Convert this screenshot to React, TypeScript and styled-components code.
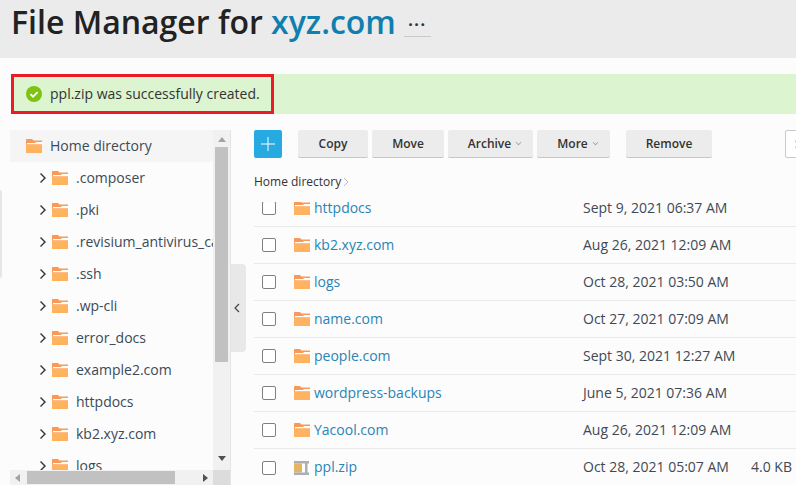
import React from 'react';
import styled, {createGlobalStyle} from 'styled-components';

const treeItems = ['.composer', '.pki', '.revisium_antivirus_cache', '.ssh', '.wp-cli', 'error_docs', 'example2.com', 'httpdocs', 'kb2.xyz.com', 'logs'];

const files = [
    {name: 'httpdocs', date: 'Sept 9, 2021 06:37 AM'},
    {name: 'kb2.xyz.com', date: 'Aug 26, 2021 12:09 AM'},
    {name: 'logs', date: 'Oct 28, 2021 03:50 AM'},
    {name: 'name.com', date: 'Oct 27, 2021 07:09 AM'},
    {name: 'people.com', date: 'Sept 30, 2021 12:27 AM'},
    {name: 'wordpress-backups', date: 'June 5, 2021 07:36 AM'},
    {name: 'Yacool.com', date: 'Aug 26, 2021 12:09 AM'},
    {name: 'ppl.zip', date: 'Oct 28, 2021 05:07 AM', size: '4.0 KB', zip: true},
];

const FolderIcon = () => (
    <IconSvg viewBox="0 0 16 14">
        <path d="M0 1C0 .4.4 0 1 0h5l1.500 1.500H16V14H0z" fill="#f8995a"/>
        <path d="M1 4h8l1-1h6v2.500H1z" fill="#fff"/>
        <path d="M0 5.500h16V14H0z" fill="#ffb25f"/>
    </IconSvg>
);

const ZipIcon = () => (
    <IconSvg viewBox="0 0 16 14">
        <path d="M0 2.500h8v9H0z" fill="#e3b562"/>
        <path d="M8 2.500h3v9H8zM13.500 2.500H15v9h-1.500z" fill="#fff"/>
        <path d="M0 0h15v2.500H0zM0 11.500h15V14H0zM11 2h2.500v10H11z" fill="#a9afb4"/>
    </IconSvg>
);

const App: React.FC = () => {
    return (
        <Page>
            <GlobalStyle/>
            <Header>
                <Title>File Manager for <DomainLink>xyz.com</DomainLink></Title>
                <DotsButton>···</DotsButton>
            </Header>
            <AlertBar>
                <AlertMarked>
                    <svg width="16" height="16" viewBox="0 0 16 16">
                        <circle cx="8" cy="8" r="8" fill="#7cc40f"/>
                        <path d="M4.400 8.200l2.600 2.500 4.600-4.600" fill="none" stroke="#fff" strokeWidth="1.800"/>
                    </svg>
                    ppl.zip was successfully created.
                </AlertMarked>
            </AlertBar>
            <Content>
                <Sliver/>
                <TreePanel>
                    <TreeView>
                        <HomeRow><FolderIcon/><TreeLabel>Home directory</TreeLabel></HomeRow>
                        {treeItems.map(item => (
                            <TreeRow key={item}>
                                <svg width="8" height="12" viewBox="0 0 8 12">
                                    <path d="M1.500 1.500L6 6l-4.500 4.500" fill="none" stroke="#333" strokeWidth="1.400"/>
                                </svg>
                                <FolderIcon/>
                                <TreeLabel>{item}</TreeLabel>
                            </TreeRow>
                        ))}
                    </TreeView>
                    <VTrack>
                        <Arrow $dir="up"/>
                        <VThumb/>
                        <Arrow $dir="down"/>
                    </VTrack>
                    <HTrack>
                        <Arrow $dir="left"/>
                        <HThumb/>
                        <Arrow $dir="right"/>
                    </HTrack>
                    <Corner/>
                </TreePanel>
                <CollapseHandle>
                    <svg width="6" height="10" viewBox="0 0 6 10">
                        <path d="M5 1L1 5l4 4" fill="none" stroke="#444" strokeWidth="1.200"/>
                    </svg>
                </CollapseHandle>
                <Main>
                    <Toolbar>
                        <AddButton>
                            <svg width="14" height="14" viewBox="0 0 14 14">
                                <path d="M7 0v14M0 7h14" stroke="#fff" strokeWidth="1"/>
                            </svg>
                        </AddButton>
                        <ActionButton $w={70} $gap={4}>Copy</ActionButton>
                        <ActionButton $w={72} $gap={4}>Move</ActionButton>
                        <ActionButton $w={85} $gap={4} $menu>Archive<Caret/></ActionButton>
                        <ActionButton $w={73} $gap={16} $menu>More<Caret/></ActionButton>
                        <ActionButton $w={86} $gap={73}>Remove</ActionButton>
                        <SearchInput>S</SearchInput>
                    </Toolbar>
                    <Breadcrumb>
                        Home directory
                        <svg width="6" height="10" viewBox="0 0 6 10">
                            <path d="M1 1l4 4-4 4" fill="none" stroke="#bbb" strokeWidth="1"/>
                        </svg>
                    </Breadcrumb>
                    <ListWindow>
                        <FileList>
                            {files.map(file => (
                                <FileRow key={file.name}>
                                    <Checkbox/>
                                    {file.zip ? <ZipIcon/> : <FolderIcon/>}
                                    <FileName>{file.name}</FileName>
                                    <FileDate>{file.date}</FileDate>
                                    <FileSize>{file.size}</FileSize>
                                </FileRow>
                            ))}
                        </FileList>
                    </ListWindow>
                </Main>
            </Content>
        </Page>
    );
};

export default App;

const GlobalStyle = createGlobalStyle`
    html, body {
        margin: 0;
        padding: 0;
        background: #fcfcfc;
    }
`;

const Page = styled.div`
    width: 796px;
    height: 485px;
    overflow: hidden;
    display: flex;
    flex-direction: column;
    font-family: "Open Sans", "Liberation Sans", sans-serif;
    font-size: 14px;
    color: #333;
    background: #fcfcfc;
`;

const Header = styled.div`
    flex: none;
    height: 58px;
    box-sizing: border-box;
    padding-left: 11px;
    display: flex;
    align-items: flex-start;
    background: #ebebeb;
`;

const Title = styled.h1`
    margin: 0;
    font-size: 32px;
    line-height: 44px;
    font-weight: 600;
    color: #222;
    white-space: nowrap;
`;

const DomainLink = styled.span`
    color: #0f7fb0;
`;

const DotsButton = styled.div`
    width: 27px;
    height: 14px;
    margin: 22px 0 0 8px;
    border-bottom: 1px solid #c9c9c9;
    font-size: 16px;
    font-weight: 700;
    letter-spacing: 1.500px;
    line-height: 4px;
    text-align: center;
    color: #333;
`;

const AlertBar = styled.div`
    flex: none;
    height: 40px;
    margin: 16px 0 16px 11px;
    display: flex;
    background: #dcf4cf;
`;

const AlertMarked = styled.div`
    width: 263px;
    box-sizing: border-box;
    padding: 0 0 1px 12px;
    display: flex;
    align-items: center;
    gap: 8px;
    border: 3px solid #ed1c24;
    color: #333;
    white-space: nowrap;
`;

const Content = styled.div`
    flex: 1;
    min-height: 0;
    display: flex;
    align-items: stretch;
`;

const Sliver = styled.div`
    flex: none;
    width: 2px;
    height: 88px;
    margin: 60px 8px 0 0;
    background: #e6e6e6;
    border-radius: 0 3px 3px 0;
`;

const TreePanel = styled.div`
    flex: none;
    width: 221px;
    box-sizing: border-box;
    display: grid;
    grid-template-columns: 203px 17px;
    grid-template-rows: 340px 15px;
    border-right: 1px solid #e4e4e4;
`;

const TreeView = styled.div`
    overflow: hidden;
    min-width: 0;
`;

const HomeRow = styled.div`
    height: 32px;
    padding-left: 16px;
    display: flex;
    align-items: center;
    gap: 8px;
    background: #f5f5f5;
`;

const TreeRow = styled.div`
    height: 32px;
    padding-left: 29px;
    display: flex;
    align-items: center;
    white-space: nowrap;

    svg:first-child {
        flex: none;
        margin: 0 5px 0 0;
    }
`;

const TreeLabel = styled.span`
    margin: -2px 0 0 8px;
    white-space: nowrap;
    color: #3b4a57;

    ${HomeRow} & {
        margin-left: 0;
    }
`;

const IconSvg = styled.svg`
    flex: none;
    width: 16px;
    height: 14px;
`;

const VTrack = styled.div`
    display: flex;
    flex-direction: column;
    align-items: center;
    padding: 7px 0 9px;
    box-sizing: border-box;
    background: #f1f1f1;
`;

const VThumb = styled.div`
    width: 13px;
    height: 215px;
    margin: 5px 0 auto;
    background: #c1c1c1;
`;

const HTrack = styled.div`
    display: flex;
    align-items: center;
    padding: 0 5px;
    background: #f1f1f1;
`;

const HThumb = styled.div`
    width: 148px;
    height: 13px;
    margin: 0 auto 0 7px;
    background: #c1c1c1;
`;

const Corner = styled.div`
    background: #dcdcdc;
`;

const arrowBorders = {
    up: 'border-width: 0 4px 5px; border-color: transparent transparent #a3a3a3;',
    down: 'border-width: 5px 4px 0; border-color: #505050 transparent transparent;',
    left: 'border-width: 4px 5px 4px 0; border-color: transparent #a3a3a3 transparent transparent;',
    right: 'border-width: 4px 0 4px 5px; border-color: transparent transparent transparent #505050;',
};

const Arrow = styled.div<{$dir: keyof typeof arrowBorders}>`
    flex: none;
    width: 0;
    height: 0;
    border-style: solid;
    ${props => arrowBorders[props.$dir]}
`;

const CollapseHandle = styled.div`
    flex: none;
    width: 15px;
    height: 88px;
    box-sizing: border-box;
    padding-right: 3px;
    margin: 134px 8px 0 0;
    display: flex;
    align-items: center;
    justify-content: center;
    background: #e8e8e8;
    border-radius: 0 4px 4px 0;
`;

const Main = styled.div`
    flex: 1;
    min-width: 0;
    display: flex;
    flex-direction: column;
`;

const Toolbar = styled.div`
    flex: none;
    height: 28px;
    display: flex;
    white-space: nowrap;
`;

const AddButton = styled.div`
    flex: none;
    width: 28px;
    height: 28px;
    margin-right: 16px;
    display: flex;
    align-items: center;
    justify-content: center;
    background: #27a9e1;
    border-radius: 2px;
`;

const ActionButton = styled.div<{$w: number; $gap: number; $menu?: boolean}>`
    flex: none;
    width: ${props => props.$w}px;
    height: 28px;
    box-sizing: border-box;
    padding-left: ${props => props.$menu ? 8 : 0}px;
    margin-right: ${props => props.$gap}px;
    display: flex;
    align-items: center;
    justify-content: center;
    gap: 4px;
    background: #ececec;
    border-bottom: 1px solid #c6c6c6;
    border-radius: 2px;
    font-size: 12px;
    font-weight: 600;
    color: #333;
`;

const Caret = styled.span`
    width: 4px;
    height: 4px;
    margin: -2px 0 0 1px;
    border-right: 1px solid #999;
    border-bottom: 1px solid #999;
    transform: rotate(45deg) scale(.8);
`;

const SearchInput = styled.div`
    flex: none;
    width: 40px;
    height: 28px;
    box-sizing: border-box;
    padding-left: 9px;
    border: 1px solid #c9c9c9;
    border-radius: 2px;
    background: #fff;
    line-height: 26px;
    font-size: 12px;
`;

const Breadcrumb = styled.div`
    flex: none;
    height: 16px;
    margin-top: 16px;
    display: flex;
    align-items: center;
    gap: 2px;
    font-size: 12px;
    line-height: 16px;
    color: #333;
`;

const ListWindow = styled.div`
    flex: 1;
    min-height: 0;
    margin-top: 12px;
    overflow: hidden;
`;

const FileList = styled.div`
    margin-top: -12px;
`;

const FileRow = styled.div`
    height: 37px;
    box-sizing: border-box;
    padding-left: 8px;
    display: flex;
    align-items: center;
    border-bottom: 1px solid #e9e9e9;
    white-space: nowrap;

    &:last-child {
        border-bottom: 0;
    }
`;

const Checkbox = styled.span`
    flex: none;
    width: 14px;
    height: 14px;
    margin-right: 18px;
    box-sizing: border-box;
    border: 1px solid #808080;
    border-radius: 2px;
    background: #fff;
`;

const FileName = styled.span`
    width: 269px;
    margin: -2px 0 0 4px;
    color: #2a84b5;
`;

const FileDate = styled.span`
    width: 168px;
    margin-top: -2px;
    color: #3f4a54;
`;

const FileSize = styled.span`
    width: 41px;
    margin-top: -2px;
    text-align: right;
    color: #3f4a54;
`;
